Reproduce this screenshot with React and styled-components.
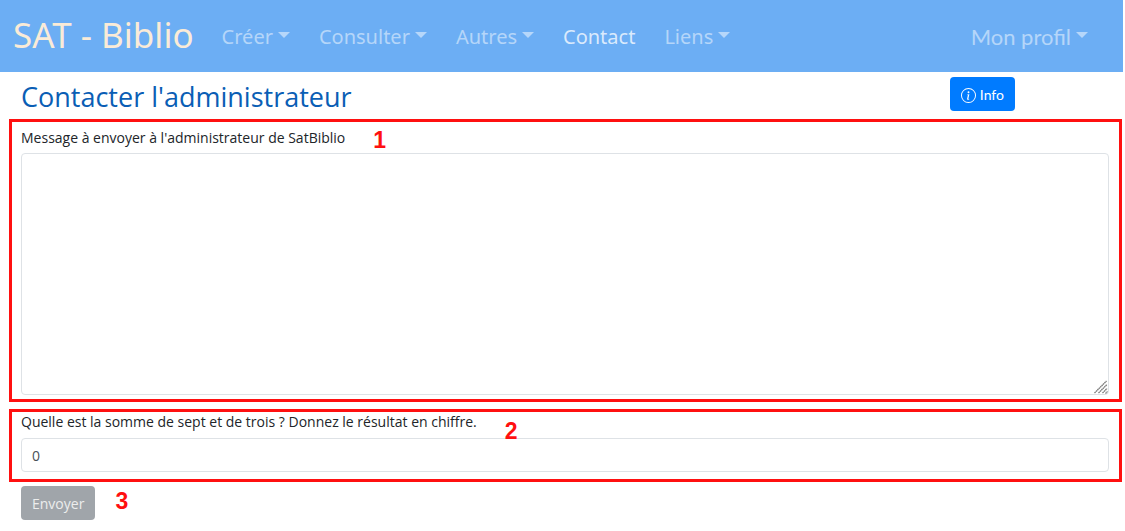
import React from "react";
import styled, { createGlobalStyle } from "styled-components";

const GlobalStyle = createGlobalStyle`
  *, *::before, *::after { box-sizing: border-box; }
  body {
    margin: 0;
    background: #fff;
    color: #212529;
    font-family: "Segoe UI", "Open Sans", "Noto Sans", sans-serif;
    font-size: 14px;
    line-height: 20px;
  }
`;

const Page = styled.div`
  padding-right: 2px;
`;

const Navbar = styled.nav`
  display: flex;
  align-items: center;
  min-height: 72px;
  padding: 0 35px 2px 13px;
  background: #6caef4;
  font-family: "Segoe UI", "Noto Sans", sans-serif;
`;

const Brand = styled.a`
  margin-right: 28px;
  color: #faebd7;
  font-size: 35px;
  line-height: 52px;
  text-decoration: none;
  white-space: nowrap;
`;

const NavList = styled.ul`
  display: flex;
  flex: 1;
  gap: 29px;
  margin: 0;
  padding: 4px 0 0;
  list-style: none;
`;

const NavItem = styled.li`
  margin-left: ${(p) => (p.$end ? "auto" : "0")};
`;

const NavLink = styled.a`
  display: flex;
  align-items: center;
  gap: 5px;
  color: ${(p) => (p.$active ? "rgba(255, 255, 255, 0.75)" : "rgba(255, 255, 255, 0.5)")};
  font-family: ${(p) => (p.$round ? 'Lato, sans-serif' : "inherit")};
  font-size: ${(p) => (p.$round ? "22px" : "20px")};
  line-height: 32px;
  text-decoration: none;
  white-space: nowrap;
`;

const Caret = styled.span`
  margin-bottom: 4px;
  border-top: 6px solid;
  border-right: 6px solid transparent;
  border-left: 6px solid transparent;
`;

const TitleRow = styled.header`
  display: flex;
  align-items: flex-start;
  justify-content: space-between;
  padding: 5px 108px 2px 21px;
`;

const Title = styled.h1`
  margin: 0;
  color: #0a5eb5;
  font-size: 27px;
  font-weight: 400;
  line-height: 40px;
`;

const Button = styled.button`
  display: inline-flex;
  align-items: center;
  gap: 4px;
  height: 34px;
  padding: 2px 11px 0;
  border: 0;
  border-radius: 4px;
  background: ${(p) => (p.$muted ? "#a0a5aa" : "#007bff")};
  color: ${(p) => (p.$muted ? "#eceded" : "#fff")};
  font-family: ${(p) => (p.$round ? 'Lato, sans-serif' : "inherit")};
  font-size: 14px;
  line-height: 20px;
`;

const Form = styled.form`
  display: flex;
  flex-direction: column;
  gap: 7px;
  padding: 0 1px 0 9px;
`;

const Group = styled.section`
  display: flex;
  flex-direction: column;
  gap: ${(p) => (p.$tight ? "4px" : "2px")};
  padding: ${(p) => (p.$tight ? "0 10px 7px 9px" : "6px 10px 4px 9px")};
  border: 3px solid #ff1010;
`;

const LabelRow = styled.div`
  display: flex;
  align-items: flex-start;
  gap: 28px;
  height: ${(p) => (p.$tight ? "22px" : "23px")};
`;

const Marker = styled.span`
  position: relative;
  z-index: 1;
  padding-top: ${(p) => (p.$low ? "7px" : "0")};
  color: #ff1010;
  font-family: "Liberation Sans", Arial, sans-serif;
  font-size: 23px;
  font-weight: 700;
  line-height: 24px;
`;

const fieldStyle = `
  display: block;
  width: 100%;
  border: 1px solid #dee2e6;
  border-radius: 4px;
  background: #fff;
  color: #495057;
  font: inherit;
`;

const TextAreaWrap = styled.div`
  position: relative;
`;

const TextArea = styled.textarea`
  ${fieldStyle}
  height: 242px;
  padding: 6px 10px;
  resize: none;
`;

const Grip = styled.svg`
  position: absolute;
  right: 1px;
  bottom: 1px;
`;

const Input = styled.input`
  ${fieldStyle}
  height: 34px;
  padding: 0 10px;
`;

const Actions = styled.div`
  display: flex;
  align-items: flex-start;
  gap: 20px;
  padding: 4px 0 8px 21px;

  ${Marker} {
    padding-top: 3px;
  }
`;

function Dropdown({ children, end, round }) {
  return (
    <NavItem $end={end}>
      <NavLink href="#" $round={round} aria-haspopup="true">
        {children}
        <Caret />
      </NavLink>
    </NavItem>
  );
}

export default function App() {
  return (
    <Page>
      <GlobalStyle />
      <Navbar>
        <Brand href="#">SAT - Biblio</Brand>
        <NavList>
          <Dropdown>Créer</Dropdown>
          <Dropdown>Consulter</Dropdown>
          <Dropdown>Autres</Dropdown>
          <NavItem>
            <NavLink href="#" $active aria-current="page">Contact</NavLink>
          </NavItem>
          <Dropdown>Liens</Dropdown>
          <Dropdown end round>Mon profil</Dropdown>
        </NavList>
      </Navbar>
      <main>
        <TitleRow>
          <Title>Contacter l'administrateur</Title>
          <Button type="button" $round>
            <svg width="15" height="15" viewBox="0 0 16 16" fill="currentColor" aria-hidden="true">
              <path fillRule="evenodd" d="M8 15A7 7 0 1 0 8 1a7 7 0 0 0 0 14zm0 1A8 8 0 1 0 8 0a8 8 0 0 0 0 16z" />
              <path d="M8.93 6.588l-2.29.287-.082.38.45.083c.294.07.352.176.288.469l-.738 3.468c-.194.897.105 1.319.808 1.319.545 0 1.178-.252 1.465-.598l.088-.416c-.2.176-.492.246-.686.246-.275 0-.375-.193-.304-.533L8.93 6.588z" />
              <circle cx="8" cy="4.5" r="1" />
            </svg>
            Info
          </Button>
        </TitleRow>
        <Form onSubmit={(e) => e.preventDefault()}>
          <Group>
            <LabelRow>
              <label htmlFor="message">Message à envoyer à l'administrateur de SatBiblio</label>
              <Marker>1</Marker>
            </LabelRow>
            <TextAreaWrap>
              <TextArea id="message" />
              <Grip width="14" height="14" viewBox="0 0 14 14" stroke="#777" strokeWidth="1.3" strokeDasharray="1.6 0.4" aria-hidden="true">
                <path d="M0.5 13L12.5 1M4.5 13L13 4.5M8.5 13L13 8.5M11.5 13.5L13.5 11.5" fill="none" />
              </Grip>
            </TextAreaWrap>
          </Group>
          <Group $tight>
            <LabelRow $tight>
              <label htmlFor="answer">Quelle est la somme de sept et de trois ? Donnez le résultat en chiffre.</label>
              <Marker $low>2</Marker>
            </LabelRow>
            <Input id="answer" type="text" inputMode="numeric" defaultValue="0" />
          </Group>
        </Form>
        <Actions>
          <Button type="submit" $muted>Envoyer</Button>
          <Marker>3</Marker>
        </Actions>
      </main>
    </Page>
  );
}
